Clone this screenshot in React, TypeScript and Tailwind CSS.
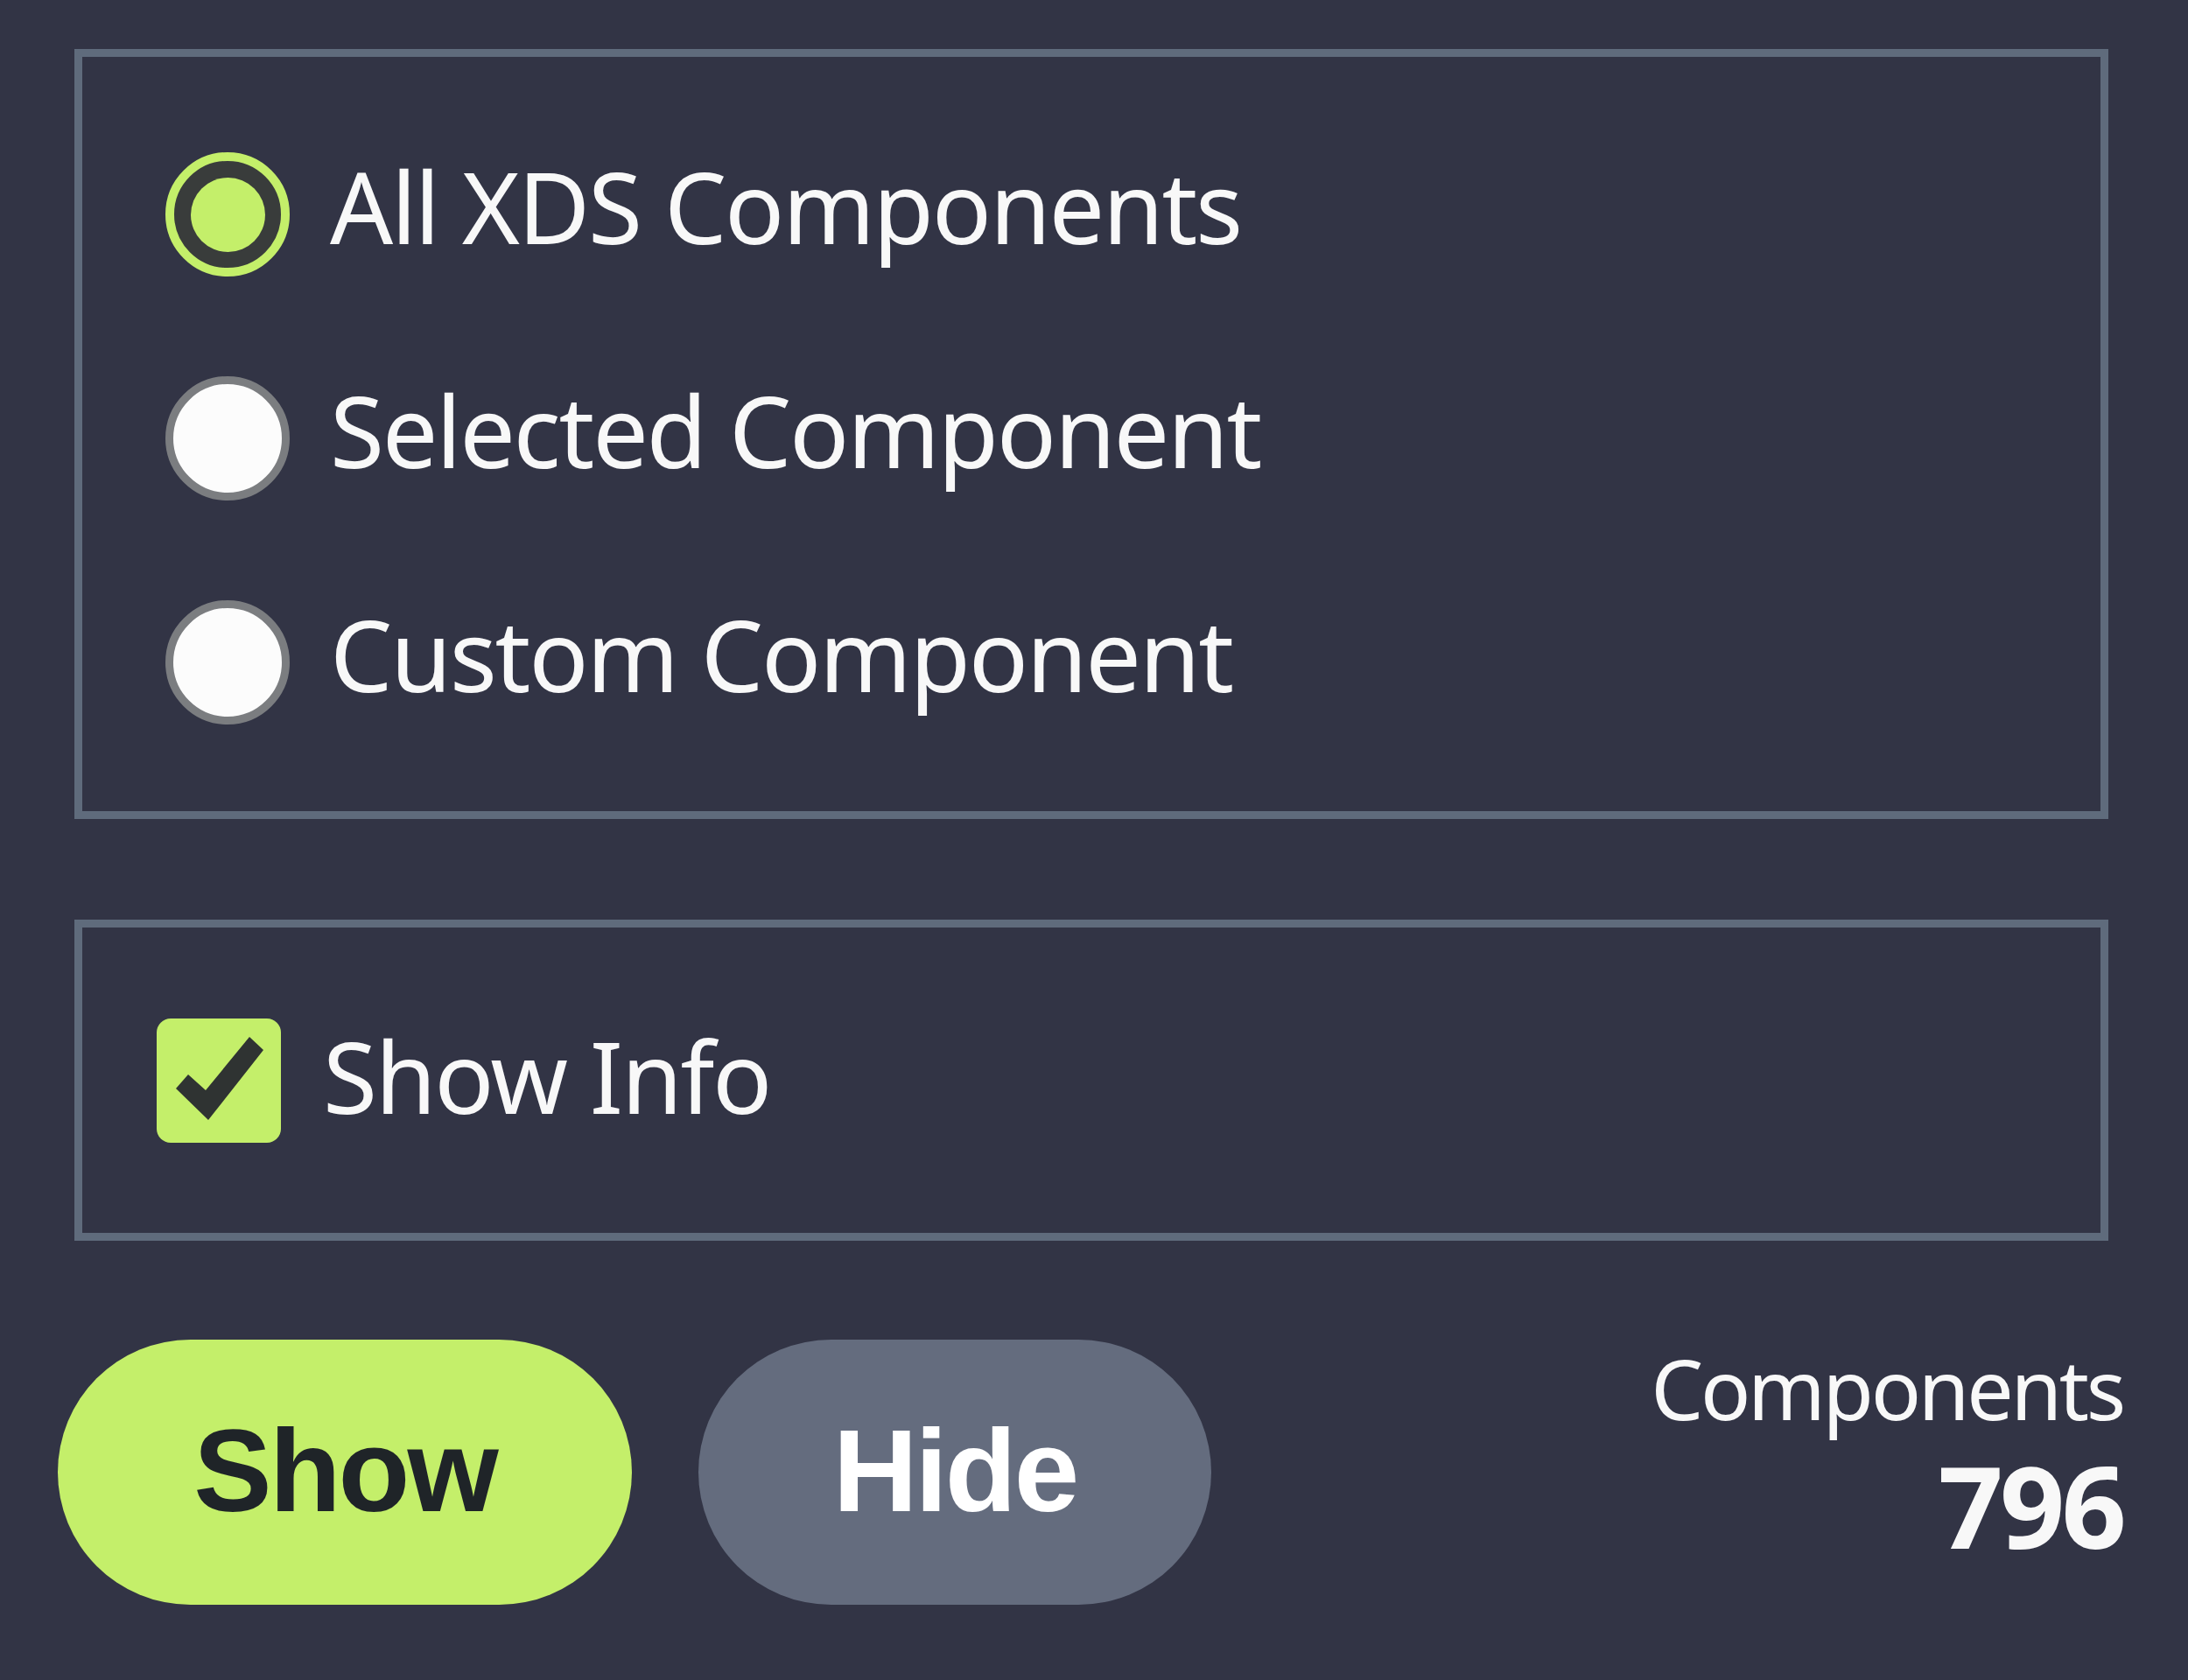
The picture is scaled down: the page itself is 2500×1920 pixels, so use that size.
import React, { useState } from 'react';

const options = ['All XDS Components', 'Selected Component', 'Custom Component'];

const Radio: React.FC<{ checked: boolean }> = ({ checked }) =>
  checked ? (
    <span className="flex h-[142px] w-[142px] shrink-0 items-center justify-center rounded-full border-[10px] border-[#c4ef6a] bg-[#393c3b]">
      <span className="h-[85px] w-[85px] rounded-full bg-[#c4ef6a]" />
    </span>
  ) : (
    <span className="h-[142px] w-[142px] shrink-0 rounded-full border-[9px] border-[#7b7d80] bg-[#fcfcfc]" />
  );

export default function App() {
  const [selected, setSelected] = useState(0);
  const [showInfo, setShowInfo] = useState(true);

  return (
    <div className="min-h-screen w-full bg-[#323445] pl-[85px] pr-[91px] pt-[56px] font-['Noto_Sans',sans-serif] text-[#f8f8f8]">
      {/* component scope */}
      <div className="flex flex-col gap-[114px] border-[9px] border-[#5f6b7c] pb-[99px] pl-[95px] pt-[109px]">
        {options.map((label, i) => (
          <button
            key={label}
            onClick={() => setSelected(i)}
            className="flex h-[142px] items-center gap-[46px] text-left"
          >
            <Radio checked={selected === i} />
            <span className="mb-[20px] text-[113px] leading-none tracking-[-0.02em]">{label}</span>
          </button>
        ))}
      </div>

      {/* options */}
      <div className="mt-[115px] flex h-[367px] items-center border-[9px] border-[#5f6b7c] pl-[85px]">
        <button onClick={() => setShowInfo(!showInfo)} className="flex items-center gap-[48px]">
          <span className="flex h-[142px] w-[142px] shrink-0 items-center justify-center rounded-[16px] bg-[#c4ef6a]">
            {showInfo && (
              <svg viewBox="0 0 142 142" className="h-[142px] w-[142px]">
                <polygon points="22,80 36,64 56,82 106,21 122,36 59,116" fill="#2f3332" />
              </svg>
            )}
          </span>
          <span className="mb-[11px] text-[113px] leading-none tracking-[-0.02em]">Show Info</span>
        </button>
      </div>

      {/* actions + count */}
      <div className="-ml-[19px] -mr-[17px] mt-[113px] flex items-start justify-between">
        <div className="flex gap-[76px] font-['Liberation_Sans',Arial,sans-serif] text-[134px] font-bold leading-none tracking-[-3px]">
          <button className="flex h-[303px] w-[656px] items-center justify-center rounded-full bg-[#c4ef6a] text-[#1f2428]">
            <span className="mb-[4px]">Show</span>
          </button>
          <button className="flex h-[303px] w-[586px] items-center justify-center rounded-full bg-[#646c7e] text-white">
            <span className="mb-[4px]">Hide</span>
          </button>
        </div>
        <div className="flex flex-col items-end pt-[8px]">
          <span className="text-[95px] leading-none tracking-[-0.035em]">Components</span>
          <span className="mt-[21px] text-[130px] font-bold leading-none tracking-[-0.03em]">796</span>
        </div>
      </div>
    </div>
  );
}
